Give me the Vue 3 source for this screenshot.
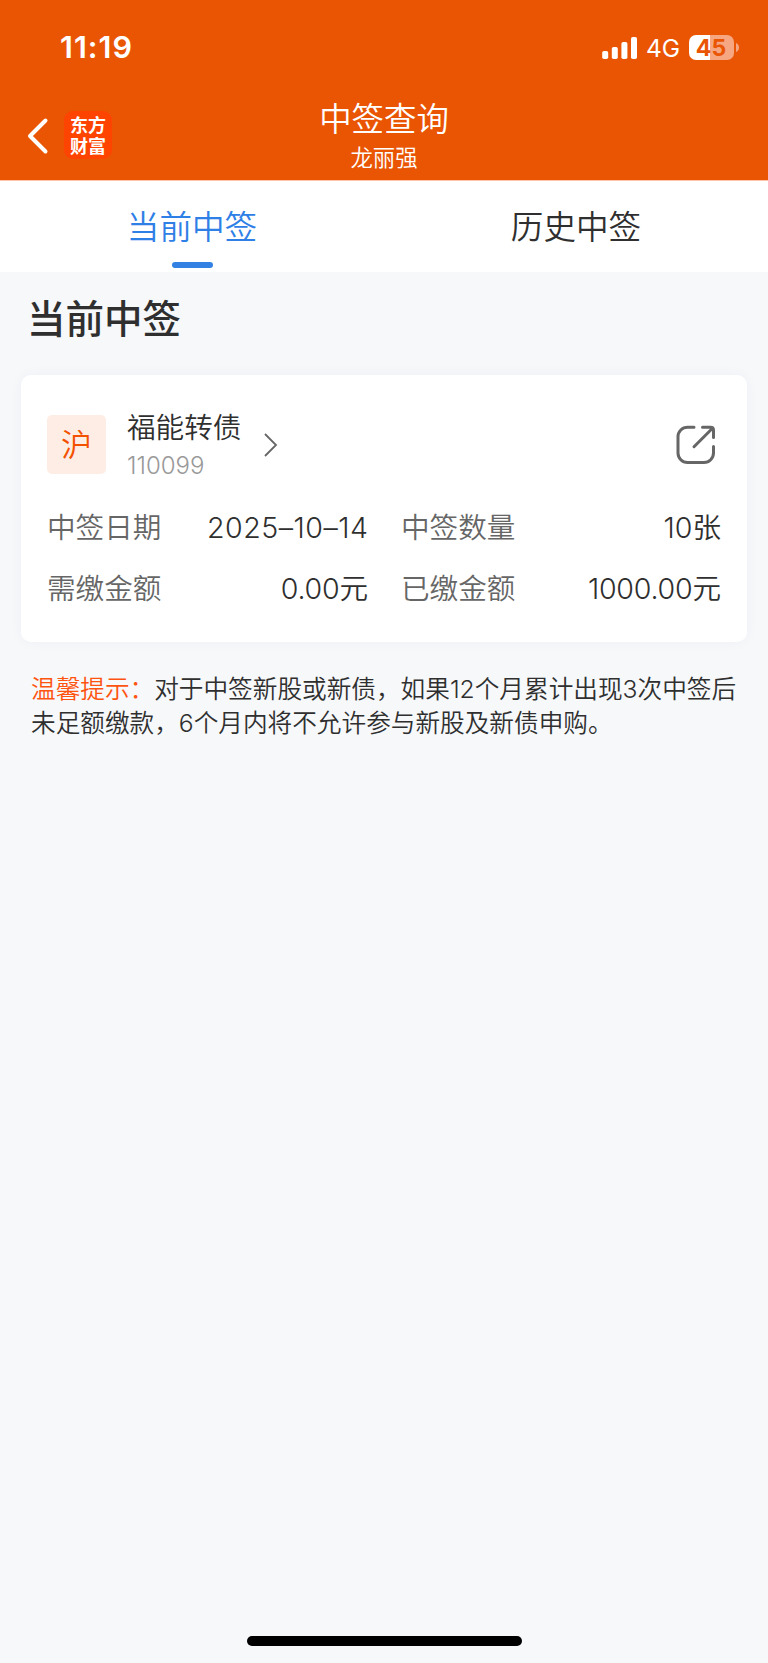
<script setup>
const fields = [
  { label: '中签日期', value: '2025–10–14', unit: '', kind: 'date' },
  { label: '中签数量', value: '10', unit: '张', kind: 'count' },
  { label: '需缴金额', value: '0.00', unit: '元', kind: 'amount' },
  { label: '已缴金额', value: '1000.00', unit: '元', kind: 'amount' }
]
</script>

<template>
  <div class="screen">
    <header class="header">
      <div class="status">
        <span class="time">11:19</span>
        <div class="status-right">
          <svg class="signal" width="36" height="22" viewBox="0 0 36 22" fill="#fff">
            <rect x="0.2" y="14" width="6" height="8" rx="1.8" />
            <rect x="9.8" y="10" width="6" height="12" rx="1.8" />
            <rect x="19.4" y="5" width="6" height="17" rx="1.8" />
            <rect x="29" y="0" width="6" height="22" rx="1.8" />
          </svg>
          <span class="network">4G</span>
          <div class="battery">45</div>
          <svg class="battery-cap" width="3" height="9" viewBox="0 0 3 9"><path d="M0 0Q3 1.5 3 4.5T0 9Z" fill="#f6a680" /></svg>
        </div>
      </div>
      <div class="nav">
        <div class="nav-left">
          <svg class="back" width="22" height="38" viewBox="0 0 22 38" fill="none" stroke="#fff" stroke-width="4" stroke-linejoin="round" stroke-linecap="round">
            <path d="M18.5 3.5 3 19l15.500 15.500" />
          </svg>
          <div class="logo"><span>东方</span><span>财富</span></div>
        </div>
        <div class="titles">
          <div class="title">中签查询</div>
          <div class="user">龙丽强</div>
        </div>
        <div class="nav-right"></div>
      </div>
    </header>

    <nav class="tabs">
      <div class="tab active">当前中签</div>
      <div class="tab">历史中签</div>
    </nav>

    <main class="main">
      <h1 class="heading">当前中签</h1>
      <section class="card">
        <div class="card-head">
          <div class="market">沪</div>
          <div class="bond">
            <div class="name">福能转债</div>
            <div class="code">110099</div>
          </div>
          <svg class="chevron" width="14" height="24" viewBox="0 0 14 24" fill="none" stroke="#666" stroke-width="1.8">
            <path d="M1 1 12 12 1 23" />
          </svg>
          <svg class="share" width="40" height="40" viewBox="0 0 40 40" fill="none" stroke="#666" stroke-width="3" stroke-linecap="round" stroke-linejoin="round">
            <path d="M18 2.200H11.500A9.500 9.500 0 0 0 2 11.700V28A9.500 9.500 0 0 0 11.500 37.500H28A9.500 9.500 0 0 0 37.500 28V21.500" />
            <path d="M26.500 2.200H34.500Q37.500 2.200 37.500 5V12.500M36.500 3.200 18 21.700" />
          </svg>
        </div>
        <div class="fields">
          <div v-for="f in fields" :key="f.label" class="field">
            <span class="label">{{ f.label }}</span>
            <span class="value"><span :class="f.kind">{{ f.value }}</span>{{ f.unit }}</span>
          </div>
        </div>
      </section>
      <p class="tip"><span class="tip-title">温馨提示：</span>对于中签新股或新债，如果12个月累计出现3次中签后<br />未足额缴款，6个月内将不允许参与新股及新债申购。</p>
    </main>

    <div class="home"></div>
  </div>
</template>

<style>
body {
  margin: 0;
}
</style>

<style scoped>
.screen {
  box-sizing: border-box;
  width: 768px;
  height: 1663px;
  display: flex;
  flex-direction: column;
  background: #f6f8fa;
  color: #2f2f2f;
  font-family: Inter, "Noto Sans CJK SC", sans-serif;
  font-weight: 350;
  white-space: nowrap;
  overflow: hidden;
}
.header {
  height: 180px;
  background: #ea5504;
  border-bottom: 1px solid #ffc5ab;
  color: #fff;
}
.status {
  height: 95px;
  display: flex;
  justify-content: space-between;
  padding: 0 30px 0 60px;
}
.time {
  line-height: 93px;
  font-size: 30.5px;
  font-weight: 600;
  letter-spacing: 1px;
}
.status-right {
  display: flex;
  align-items: center;
}
.signal {
  margin-right: 8px;
}
.network {
  width: 34px;
  margin-right: 9px;
  font-size: 24.5px;
  font-weight: 400;
  line-height: 98px;
  letter-spacing: -0.2px;
}
.battery {
  width: 45px;
  height: 25px;
  border-radius: 7px;
  background: linear-gradient(90deg, #fff 20.500px, #f6a680 20.500px);
  color: #ea5504;
  font-size: 23px;
  font-weight: 650;
  line-height: 26px;
  text-align: center;
  text-indent: -1px;
}
.battery-cap {
  margin: 0 -1px 0 2px;
}
.nav {
  height: 85px;
  display: flex;
}
.nav-left,
.nav-right {
  flex: 1;
  display: flex;
}
.back {
  margin: 22px 0 0 27px;
}
.logo {
  box-sizing: border-box;
  display: flex;
  flex-direction: column;
  width: 48px;
  height: 48px;
  margin: 16px 0 0 15px;
  padding-top: 3px;
  border-radius: 9px;
  background: #ff4400;
  font-family: "Noto Sans CJK SC", sans-serif;
  font-size: 18px;
  font-weight: 700;
  line-height: 20.500px;
  text-align: center;
}
.titles {
  text-align: center;
}
.title {
  font-size: 32.400px;
  line-height: 49px;
}
.user {
  font-size: 22.400px;
  line-height: 28px;
}
.tabs {
  display: flex;
  height: 91px;
  background: #fff;
  font-size: 32.600px;
}
.tab {
  flex: 1;
  display: flex;
  flex-direction: column;
  align-items: center;
  line-height: 93px;
}
.active {
  color: #2f80e6;
}
.active::after {
  content: "";
  width: 41px;
  height: 6px;
  margin-top: -12px;
  border-radius: 3px;
  background: #3381e3;
}
.main {
  flex: 1;
}
.heading {
  margin: 0;
  padding-left: 27px;
  height: 103px;
  font-size: 38.500px;
  font-weight: 500;
  line-height: 94px;
}
.card {
  box-sizing: border-box;
  width: 726px;
  height: 267px;
  margin-left: 21px;
  padding: 32px 26px 0 25px;
  border-radius: 10px;
  background: #fff;
  box-shadow: 0 0 14px rgba(40, 60, 90, 0.04);
}
.card-head {
  display: flex;
  height: 90px;
}
.market {
  width: 59px;
  height: 59px;
  margin: 8px 0 0 1px;
  border-radius: 5px;
  background: #fdede5;
  color: #f35100;
  font-size: 31px;
  line-height: 60px;
  text-align: center;
}
.bond {
  width: 137px;
  margin-left: 21px;
}
.name {
  font-size: 28.600px;
  line-height: 42px;
}
.code {
  color: #999;
  font-size: 24px;
  line-height: 34px;
}
.chevron {
  margin-top: 26px;
}
.share {
  margin: 18px 5px 0 auto;
}
.fields {
  display: grid;
  grid-template-columns: 321px 320px;
  column-gap: 33px;
  grid-auto-rows: 61.300px;
  padding-left: 1px;
}
.field {
  display: flex;
  justify-content: space-between;
  font-size: 28.600px;
  line-height: 61px;
}
.label {
  color: #666;
}
.date {
  margin-right: -0.500px;
  letter-spacing: 0.500px;
}
.amount {
  letter-spacing: -0.250px;
}
.tip {
  margin: 31px 0 0 31px;
  font-size: 24.650px;
  line-height: 33.600px;
}
.tip-title {
  color: #ff5410;
}
.home {
  width: 275px;
  height: 10px;
  margin: 0 auto 17px;
  border-radius: 5px;
  background: #000;
}
</style>
